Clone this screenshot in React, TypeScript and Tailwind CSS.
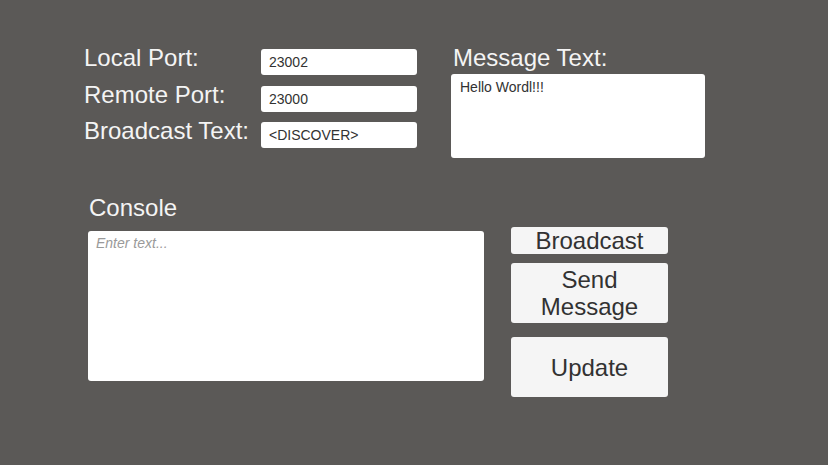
import React from 'react';

const font = { fontFamily: '"Liberation Sans", Arial, sans-serif' };

const Field: React.FC<{ label: string; value: string; className?: string }> = ({ label, value, className }) => (
  <div className={`flex items-start ${className ?? ''}`}>
    <div className="w-[177px] text-[24px] leading-[18px] text-[#f4f4f4] whitespace-nowrap">{label}</div>
    <div className="w-[156px] h-[26px] bg-white rounded-[3px] pl-[8px] text-[14px] leading-[26px] text-[#323232]">{value}</div>
  </div>
);

const App: React.FC = () => {
  return (
    <div style={font} className="w-[828px] h-[465px] bg-[#5b5957] pl-[84px] pt-[45px] overflow-hidden">
      {/* top */}
      <div className="flex">
        <div className="flex flex-col mt-[4px]">
          <Field label="Local Port:" value="23002" />
          <Field label="Remote Port:" value="23000" className="mt-[11px]" />
          <Field label="Broadcast Text:" value="<DISCOVER>" className="mt-[10px]" />
        </div>
        <div className="ml-[34px] flex flex-col">
          <div className="pl-[2px] h-[26px] text-[24px] leading-[26px] text-[#f4f4f4]">Message Text:</div>
          <div className="mt-[3px] w-[254px] h-[84px] bg-white rounded-[3px] pl-[9px] pt-[3px] text-[14px] leading-[20px] text-[#323232]">
            Hello Wordl!!!
          </div>
        </div>
      </div>

      {/* console + buttons */}
      <div className="flex pl-[4px] mt-[37px]">
        <div className="flex flex-col">
          <div className="pl-[1px] h-[26px] text-[24px] leading-[26px] text-[#f4f4f4]">Console</div>
          <div className="mt-[10px] w-[396px] h-[150px] bg-white rounded-[3px] pl-[8px] pt-[2px] text-[14px] leading-[20px] italic text-[#9a9a9a]">
            Enter text...
          </div>
        </div>
        <div className="ml-[27px] mt-[32px] w-[157px] flex flex-col text-[24px] leading-[27px] text-[#323232]">
          <button className="h-[27px] bg-[#f5f5f5] rounded-[3px] flex items-center justify-center">Broadcast</button>
          <button className="mt-[9px] h-[60px] bg-[#f5f5f5] rounded-[3px] flex flex-col items-center justify-center">
            <span>Send</span>
            <span>Message</span>
          </button>
          <button className="mt-[14px] h-[60px] bg-[#f5f5f5] rounded-[3px] flex items-center justify-center">Update</button>
        </div>
      </div>
    </div>
  );
};

export default App;
